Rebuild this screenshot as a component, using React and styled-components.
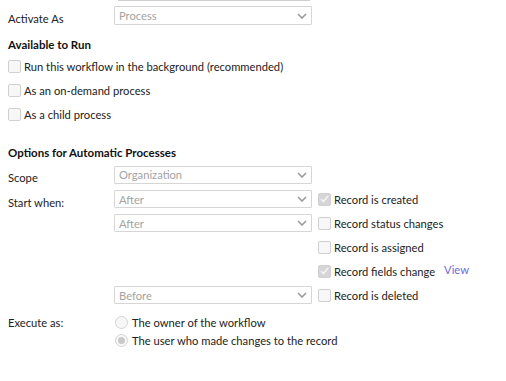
import React from 'react';
import styled, { createGlobalStyle } from 'styled-components';

const GlobalStyle = createGlobalStyle`
  body {
    margin: 0;
    background: #fff;
    font-family: Lato, 'Open Sans', sans-serif;
    font-size: 11.2px;
    color: #222;
  }
`;

const Page = styled.div`
  width: 506px;
  height: 381px;
  padding: 0 8px;
  box-sizing: border-box;
  overflow: hidden;
`;

const Stub = styled.div`
  margin-left: 110px;
  width: 192px;
  height: 1px;
  background: #cfcfcf;
`;

const Row = styled.div`
  display: grid;
  grid-template-columns: 106px 198px auto;
  align-items: ${p => p.$align || 'center'};
  height: ${p => p.$h || 24}px;
  margin-top: ${p => p.$mt || 0}px;
`;

const Label = styled.div`
  color: #222;
  padding-top: ${p => p.$pt || 0}px;
`;

const Heading = styled.div`
  font-weight: 700;
  font-size: 11.5px;
  color: #111;
  height: ${p => p.$h || 18}px;
  line-height: ${p => p.$h || 18}px;
  margin-top: ${p => p.$mt || 0}px;
`;

const SelectBox = styled.div`
  height: ${p => p.$h || 18}px;
  border: 1px solid #d6d6d6;
  border-radius: 1px;
  box-sizing: border-box;
  display: flex;
  align-items: center;
  padding-left: 4px;
  color: #a3a3a3;
  background: #fff;
`;

const Chevron = styled.svg`
  margin-left: auto;
  margin-right: 4px;
  width: 10px;
  height: 6px;
`;

const CheckRow = styled.label`
  display: flex;
  align-items: center;
  gap: 3px;
  height: 24px;
  color: #222;
`;

const Side = styled.div`
  margin-left: 6px;
  display: flex;
  align-items: center;
`;

const Box = styled.span`
  width: 13px;
  height: 13px;
  box-sizing: border-box;
  border: 1px solid #d0d0d0;
  border-radius: 2px;
  background: ${p => (p.$checked ? '#d6d6d6' : '#f7f7f7')};
  display: flex;
  align-items: center;
  justify-content: center;
  flex: none;
`;

const Radio = styled.span`
  width: 13px;
  height: 13px;
  box-sizing: border-box;
  border-radius: 50%;
  border: 1px solid #d4d4d4;
  background: #f7f7f7;
  display: flex;
  align-items: center;
  justify-content: center;
  flex: none;
  &::after {
    content: '';
    width: 7px;
    height: 7px;
    border-radius: 50%;
    background: ${p => (p.$checked ? '#c9c9c9' : 'transparent')};
  }
`;

const Radios = styled.div`
  grid-column: 2 / 4;
  padding-top: 1px;
`;

const RadioRow = styled.div`
  display: flex;
  align-items: center;
  gap: 4px;
  height: 18px;
  margin-left: 1px;
`;

const Link = styled.a`
  color: #6b6bd8;
  margin-left: 9px;
  margin-top: -4px;
  text-decoration: none;
`;

const Select = ({ value, h }) => (
  <SelectBox $h={h}>
    {value}
    <Chevron viewBox="0 0 10 6">
      <path d="M1 1l4 4 4-4" fill="none" stroke="#9a9a9a" strokeWidth="1.6" />
    </Chevron>
  </SelectBox>
);

const Check = ({ checked, children }) => (
  <CheckRow>
    <Box $checked={checked}>
      {checked && (
        <svg width="9" height="8" viewBox="0 0 9 8">
          <path d="M1 4l2.5 2.5L8 1" fill="none" stroke="#f4f4f4" strokeWidth="1.6" />
        </svg>
      )}
    </Box>
    {children}
  </CheckRow>
);

const App = () => (
  <Page>
    <GlobalStyle />
    <Stub />
    <Row $h={20} $mt={4} $align="end">
      <Label $pt={2}>Activate As</Label>
      <Select value="Process" h={19} />
    </Row>
    <Heading $mt={11}>Available to Run</Heading>
    <Check>Run this workflow in the background (recommended)</Check>
    <Check>As an on-demand process</Check>
    <Check>As a child process</Check>
    <Heading $mt={18}>Options for Automatic Processes</Heading>
    <Row $h={25}>
      <Label $pt={6}>Scope</Label>
      <Select value="Organization" />
    </Row>
    <Row>
      <Label $pt={6}>Start when:</Label>
      <Select value="After" />
      <Side><Check checked>Record is created</Check></Side>
    </Row>
    <Row>
      <span />
      <Select value="After" />
      <Side><Check>Record status changes</Check></Side>
    </Row>
    <Row>
      <span />
      <span />
      <Side><Check>Record is assigned</Check></Side>
    </Row>
    <Row>
      <span />
      <span />
      <Side>
        <Check checked>Record fields change</Check>
        <Link href="#">View</Link>
      </Side>
    </Row>
    <Row>
      <span />
      <Select value="Before" />
      <Side><Check>Record is deleted</Check></Side>
    </Row>
    <Row $h={40} $align="start" $mt={5}>
      <Label $pt={4}>Execute as:</Label>
      <Radios>
        <RadioRow>
          <Radio />
          The owner of the workflow
        </RadioRow>
        <RadioRow>
          <Radio $checked />
          The user who made changes to the record
        </RadioRow>
      </Radios>
    </Row>
  </Page>
);

export default App;
